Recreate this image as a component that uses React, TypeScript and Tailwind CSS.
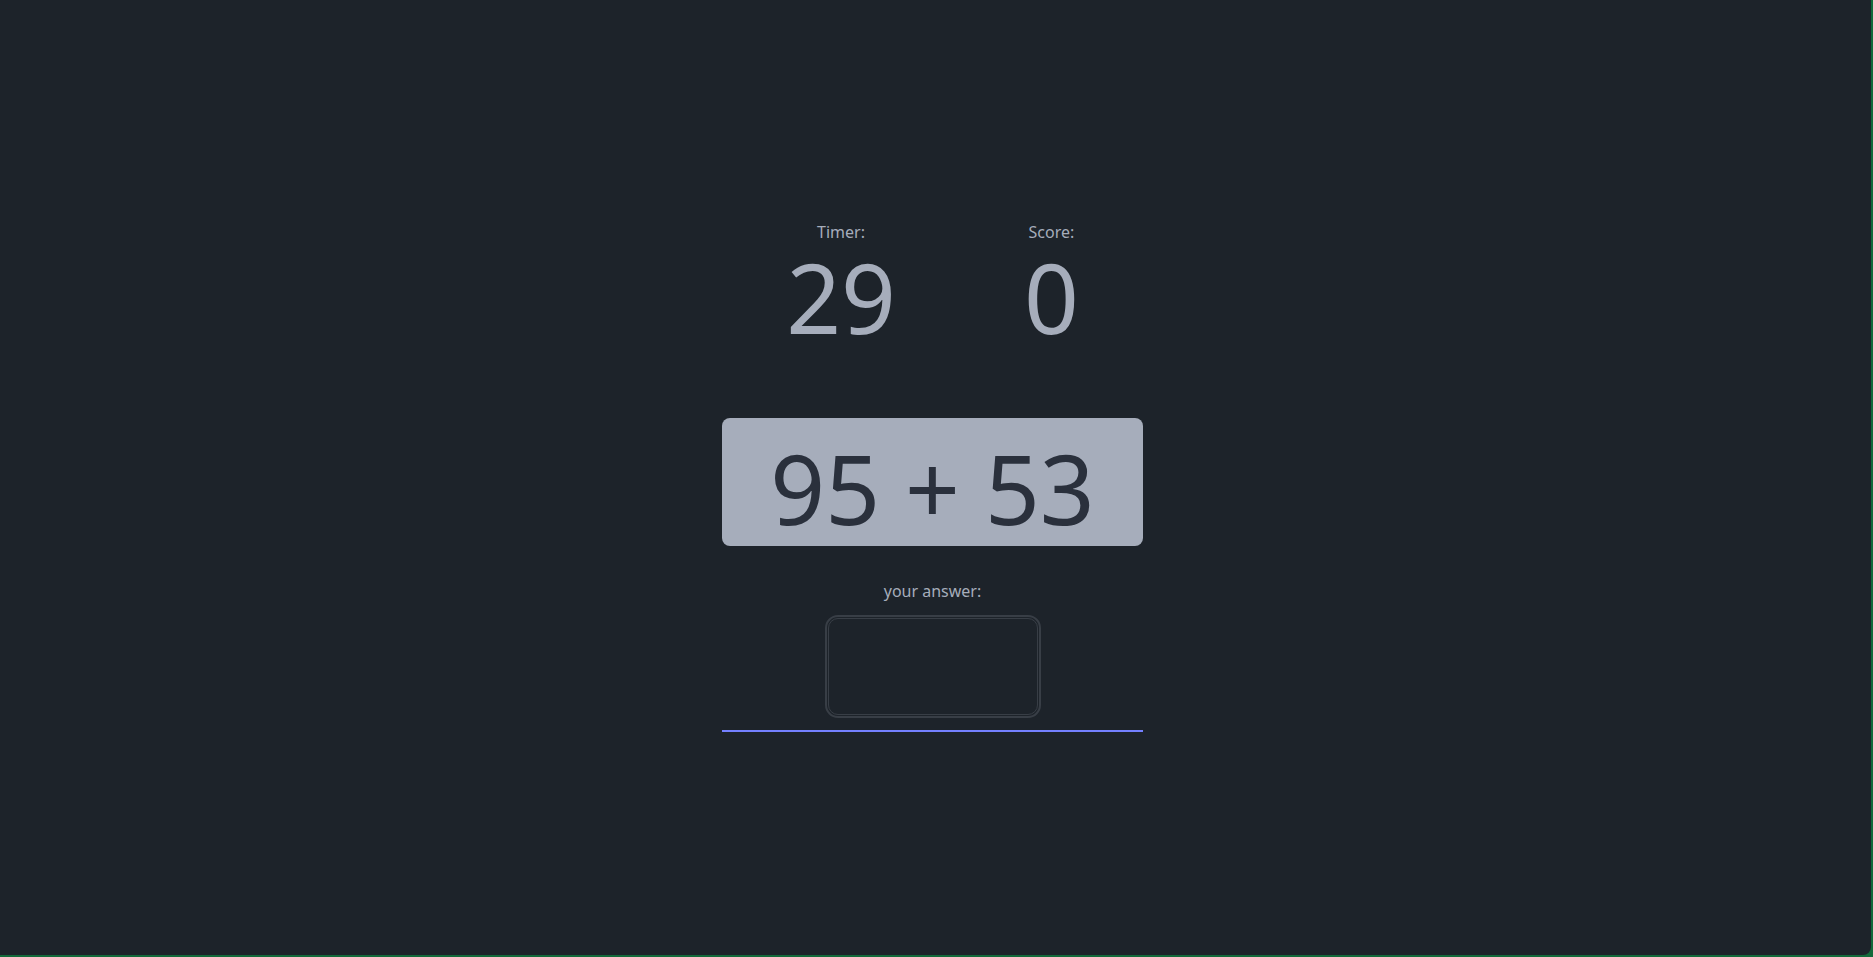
import React, { useState } from 'react';

const Stat: React.FC<{ label: string; value: number }> = ({ label, value }) => (
  <div className="flex flex-col items-center">
    <span className="text-base leading-6 text-[#a6adbb]">{label}</span>
    <span className="mt-[5px] text-8xl leading-none text-[#a6adbb]">{value}</span>
  </div>
);

export default function App() {
  const [answer, setAnswer] = useState('');

  return (
    <div className="min-h-screen bg-[#13693a] pr-[2px] pb-[2px] font-['Noto_Sans',_'Open_Sans',_sans-serif]">
      <div className="h-[955px] rounded-br-[8px] bg-[#1d232a] flex flex-col items-center pt-[220px] pr-[6px]">
        <div className="flex items-start gap-[128px]">
          <Stat label="Timer:" value={29} />
          <Stat label="Score:" value={0} />
        </div>

        <div className="mt-[73px] w-[421px] h-[128px] rounded-lg bg-[#a6adbb] flex justify-center pt-[22px]">
          <span className="text-8xl leading-none text-[#2a303c]">95 + 53</span>
        </div>

        <label className="mt-[33px] text-base leading-6 text-[#a6adbb]">your answer:</label>

        <input
          type="text"
          value={answer}
          onChange={(e) => setAnswer(e.target.value)}
          className="mt-[15px] w-[210px] h-[97px] rounded-[10px] border border-[#383e46] bg-transparent outline-2 outline-offset-1 outline-solid outline-[#383e46] text-center text-5xl text-[#a6adbb]"
        />

        <div className="mt-[15px] w-[421px] h-[2px] bg-[#7480ff]" />
      </div>
    </div>
  );
}
